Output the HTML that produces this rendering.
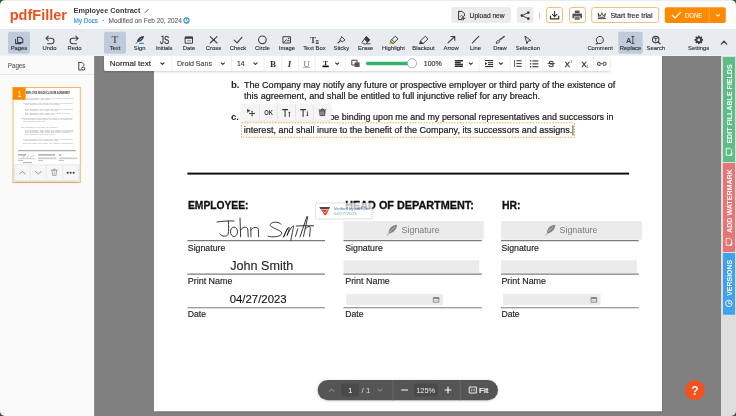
<!DOCTYPE html>
<html><head><meta charset="utf-8"><style>
html,body{margin:0;padding:0;background:#2d5b33;width:736px;height:416px;overflow:hidden}
.wrap{position:absolute;left:0;top:0;width:736px;height:416px;border-radius:5px;overflow:hidden}
svg{display:block;will-change:transform}
</style></head><body><div class="wrap">
<svg width="736" height="416" viewBox="0 0 736 416">
<defs><filter id="sh" x="-5%" y="-50%" width="110%" height="200%"><feDropShadow dx="0" dy="1" stdDeviation="1" flood-color="#000" flood-opacity="0.18"/></filter><filter id="sh2" x="-10%" y="-40%" width="120%" height="180%"><feDropShadow dx="0" dy="0.5" stdDeviation="1.2" flood-color="#000" flood-opacity="0.22"/></filter></defs>
<rect x="0" y="0" width="736" height="416" fill="#ffffff" /><rect x="0" y="0" width="736" height="30" fill="#ffffff" /><line x1="0" y1="0.5" x2="736" y2="0.5" stroke="#ececec" stroke-width="1" /><line x1="0" y1="29.5" x2="736" y2="29.5" stroke="#e3e6ea" stroke-width="1" /><text x="9.7" y="20.3" font-size="14.8" fill="#e8521f" font-family="Liberation Sans" font-weight="bold" textLength="57.3" lengthAdjust="spacingAndGlyphs" >pdfFiller</text><text x="73.6" y="13.3" font-size="7.6" fill="#3a3a3a" font-family="Liberation Sans" font-weight="bold" textLength="66.8" lengthAdjust="spacingAndGlyphs" >Employee Contract</text><path d="M145 12.5 L148.5 9" stroke="#888" stroke-width="0.9"/><text x="73.5" y="23" font-size="6.6" fill="#2f8ce0" font-family="Liberation Sans" stroke="#2f8ce0" stroke-width="0.1" textLength="24.5" lengthAdjust="spacingAndGlyphs" >My Docs</text><circle cx="103.2" cy="20.5" r="0.8" fill="#999"/><text x="108.5" y="23" font-size="6.6" fill="#666" font-family="Liberation Sans" stroke="#666" stroke-width="0.1" textLength="73.3" lengthAdjust="spacingAndGlyphs" >Modified on Feb 20, 2024</text><circle cx="186.5" cy="20.5" r="2.6" fill="none" stroke="#2f8ce0" stroke-width="1.1"/><rect x="451.3" y="7" width="59.6" height="16" fill="#ebebeb" rx="2" /><text x="469.6" y="18" font-size="6.9" fill="#2b2b2b" font-family="Liberation Sans" stroke="#2b2b2b" stroke-width="0.15" textLength="35" lengthAdjust="spacingAndGlyphs" >Upload new</text><rect x="517" y="7" width="16.5" height="16" fill="#ebebeb" rx="2" /><line x1="539.5" y1="12.5" x2="539.5" y2="18.5" stroke="#ccc" stroke-width="1" /><rect x="546.5" y="7.5" width="16" height="15" fill="#fff" rx="2.5" stroke="#f7b46c" stroke-width="0.9" /><rect x="569.5" y="7.5" width="16" height="15" fill="#fff" rx="2.5" stroke="#f7b46c" stroke-width="0.9" /><rect x="591.7" y="7.5" width="67" height="15" fill="#fff" rx="2.5" stroke="#f7b46c" stroke-width="0.9" /><text x="610.4" y="18" font-size="6.9" fill="#2b2b2b" font-family="Liberation Sans" stroke="#2b2b2b" stroke-width="0.15" textLength="42.2" lengthAdjust="spacingAndGlyphs" >Start free trial</text><rect x="664.8" y="7.3" width="61" height="15.7" fill="#ff8a00" rx="2" /><line x1="709.3" y1="7.3" x2="709.3" y2="23" stroke="#ffb25c" stroke-width="0.8" /><text x="685" y="18" font-size="6.9" fill="#fff5e8" font-family="Liberation Sans" stroke="#fff5e8" stroke-width="0.12" textLength="17.2" lengthAdjust="spacingAndGlyphs" >DONE</text><rect x="0" y="30" width="736" height="26" fill="#e8ecf0" /><line x1="0" y1="55.5" x2="736" y2="55.5" stroke="#eef1f4" stroke-width="1" /><rect x="8" y="31.8" width="22" height="22" fill="#bfcadb" rx="2" /><rect x="104" y="31.8" width="22" height="22" fill="#bfcadb" rx="2" /><rect x="618.2" y="31.8" width="24.5" height="22" fill="#bfcadb" rx="2" /><text x="19" y="50.1" font-size="6.1" fill="#2a2d31" font-family="Liberation Sans" stroke="#2a2d31" stroke-width="0.12" textLength="16.6" lengthAdjust="spacingAndGlyphs" text-anchor="middle" >Pages</text><text x="49.6" y="50.1" font-size="6.1" fill="#2a2d31" font-family="Liberation Sans" stroke="#2a2d31" stroke-width="0.12" textLength="14.0" lengthAdjust="spacingAndGlyphs" text-anchor="middle" >Undo</text><text x="74.5" y="50.1" font-size="6.1" fill="#2a2d31" font-family="Liberation Sans" stroke="#2a2d31" stroke-width="0.12" textLength="14.0" lengthAdjust="spacingAndGlyphs" text-anchor="middle" >Redo</text><text x="115" y="50.1" font-size="6.1" fill="#2a2d31" font-family="Liberation Sans" stroke="#2a2d31" stroke-width="0.12" textLength="10.75" lengthAdjust="spacingAndGlyphs" text-anchor="middle" >Text</text><text x="139.7" y="50.1" font-size="6.1" fill="#2a2d31" font-family="Liberation Sans" stroke="#2a2d31" stroke-width="0.12" textLength="11.73" lengthAdjust="spacingAndGlyphs" text-anchor="middle" >Sign</text><text x="164.2" y="50.1" font-size="6.1" fill="#2a2d31" font-family="Liberation Sans" stroke="#2a2d31" stroke-width="0.12" textLength="16.6" lengthAdjust="spacingAndGlyphs" text-anchor="middle" >Initials</text><text x="189" y="50.1" font-size="6.1" fill="#2a2d31" font-family="Liberation Sans" stroke="#2a2d31" stroke-width="0.12" textLength="12.37" lengthAdjust="spacingAndGlyphs" text-anchor="middle" >Date</text><text x="213.5" y="50.1" font-size="6.1" fill="#2a2d31" font-family="Liberation Sans" stroke="#2a2d31" stroke-width="0.12" textLength="15.29" lengthAdjust="spacingAndGlyphs" text-anchor="middle" >Cross</text><text x="238" y="50.1" font-size="6.1" fill="#2a2d31" font-family="Liberation Sans" stroke="#2a2d31" stroke-width="0.12" textLength="16.6" lengthAdjust="spacingAndGlyphs" text-anchor="middle" >Check</text><text x="262.4" y="50.1" font-size="6.1" fill="#2a2d31" font-family="Liberation Sans" stroke="#2a2d31" stroke-width="0.12" textLength="14.98" lengthAdjust="spacingAndGlyphs" text-anchor="middle" >Circle</text><text x="286.9" y="50.1" font-size="6.1" fill="#2a2d31" font-family="Liberation Sans" stroke="#2a2d31" stroke-width="0.12" textLength="16.28" lengthAdjust="spacingAndGlyphs" text-anchor="middle" >Image</text><text x="314.4" y="50.1" font-size="6.1" fill="#2a2d31" font-family="Liberation Sans" stroke="#2a2d31" stroke-width="0.12" textLength="22.45" lengthAdjust="spacingAndGlyphs" text-anchor="middle" >Text Box</text><text x="341.3" y="50.1" font-size="6.1" fill="#2a2d31" font-family="Liberation Sans" stroke="#2a2d31" stroke-width="0.12" textLength="15.62" lengthAdjust="spacingAndGlyphs" text-anchor="middle" >Sticky</text><text x="365.7" y="50.1" font-size="6.1" fill="#2a2d31" font-family="Liberation Sans" stroke="#2a2d31" stroke-width="0.12" textLength="15.31" lengthAdjust="spacingAndGlyphs" text-anchor="middle" >Erase</text><text x="393.5" y="50.1" font-size="6.1" fill="#2a2d31" font-family="Liberation Sans" stroke="#2a2d31" stroke-width="0.12" textLength="22.79" lengthAdjust="spacingAndGlyphs" text-anchor="middle" >Highlight</text><text x="423.5" y="50.1" font-size="6.1" fill="#2a2d31" font-family="Liberation Sans" stroke="#2a2d31" stroke-width="0.12" textLength="22.45" lengthAdjust="spacingAndGlyphs" text-anchor="middle" >Blackout</text><text x="451.2" y="50.1" font-size="6.1" fill="#2a2d31" font-family="Liberation Sans" stroke="#2a2d31" stroke-width="0.12" textLength="15.29" lengthAdjust="spacingAndGlyphs" text-anchor="middle" >Arrow</text><text x="475.5" y="50.1" font-size="6.1" fill="#2a2d31" font-family="Liberation Sans" stroke="#2a2d31" stroke-width="0.12" textLength="11.08" lengthAdjust="spacingAndGlyphs" text-anchor="middle" >Line</text><text x="500" y="50.1" font-size="6.1" fill="#2a2d31" font-family="Liberation Sans" stroke="#2a2d31" stroke-width="0.12" textLength="13.67" lengthAdjust="spacingAndGlyphs" text-anchor="middle" >Draw</text><text x="527.9" y="50.1" font-size="6.1" fill="#2a2d31" font-family="Liberation Sans" stroke="#2a2d31" stroke-width="0.12" textLength="24.1" lengthAdjust="spacingAndGlyphs" text-anchor="middle" >Selection</text><text x="600.1" y="50.1" font-size="6.1" fill="#2a2d31" font-family="Liberation Sans" stroke="#2a2d31" stroke-width="0.12" textLength="25.39" lengthAdjust="spacingAndGlyphs" text-anchor="middle" >Comment</text><text x="630.5" y="50.1" font-size="6.1" fill="#2a2d31" font-family="Liberation Sans" stroke="#2a2d31" stroke-width="0.12" textLength="21.49" lengthAdjust="spacingAndGlyphs" text-anchor="middle" >Replace</text><text x="655.9" y="50.1" font-size="6.1" fill="#2a2d31" font-family="Liberation Sans" stroke="#2a2d31" stroke-width="0.12" textLength="18.56" lengthAdjust="spacingAndGlyphs" text-anchor="middle" >Search</text><text x="698.7" y="50.1" font-size="6.1" fill="#2a2d31" font-family="Liberation Sans" stroke="#2a2d31" stroke-width="0.12" textLength="21.16" lengthAdjust="spacingAndGlyphs" text-anchor="middle" >Settings</text><rect x="0" y="56" width="94" height="360" fill="#fafafa" /><line x1="0" y1="74.5" x2="94" y2="74.5" stroke="#e6e6e6" stroke-width="1" /><text x="7.8" y="67.9" font-size="6.9" fill="#5a5a5a" font-family="Liberation Sans" stroke="#5a5a5a" stroke-width="0.12" textLength="17.6" lengthAdjust="spacingAndGlyphs" >Pages</text><rect x="13" y="87.5" width="67.3" height="95" fill="#fff" stroke="#f8b65c" stroke-width="1" /><rect x="12.7" y="87.4" width="13" height="12.4" fill="#ff8a00" /><text x="19.4" y="97.2" font-size="8.6" fill="#fff" font-family="Liberation Sans" textLength="4" lengthAdjust="spacingAndGlyphs" text-anchor="middle" >1</text><rect x="13.5" y="165.2" width="66.5" height="16.3" fill="#f7f7f7" stroke="#e3e3e3" stroke-width="0.6" /><rect x="94" y="56" width="627" height="360" fill="#808080" /><line x1="94.5" y1="56" x2="94.5" y2="416" stroke="#8e8e8e" stroke-width="1" /><rect x="154" y="56" width="508" height="355.5" fill="#ffffff" /><rect x="154.5" y="411.5" width="508" height="1" fill="#737373" /><rect x="662" y="56" width="1" height="356.5" fill="#767676" /><rect x="721.4" y="56" width="14.6" height="360" fill="#dedede" /><line x1="721.6" y1="56" x2="721.6" y2="416" stroke="#cfcfcf" stroke-width="0.5" /><rect x="723" y="57" width="12" height="105" fill="#5dbd87" /><rect x="723" y="163" width="12" height="89" fill="#e97474" /><rect x="723" y="253" width="12" height="61.7" fill="#42a1ec" /><rect x="104" y="56" width="506" height="15" fill="#ffffff" rx="2" filter="url(#sh)"/><rect x="104" y="56" width="506" height="4" fill="#ffffff" /><text x="109.8" y="66.3" font-size="8" fill="#1f1f1f" font-family="Liberation Sans" stroke="#1f1f1f" stroke-width="0.15" textLength="41.2" lengthAdjust="spacingAndGlyphs" >Normal text</text><text x="177" y="66.3" font-size="7.6" fill="#444" font-family="Liberation Sans" stroke="#444" stroke-width="0.12" textLength="35" lengthAdjust="spacingAndGlyphs" >Droid Sans</text><text x="237" y="66.3" font-size="7.6" fill="#333" font-family="Liberation Sans" stroke="#333" stroke-width="0.12" textLength="7.6" lengthAdjust="spacingAndGlyphs" >14</text><line x1="171.7" y1="56" x2="171.7" y2="71" stroke="#ececec" stroke-width="0.8" /><line x1="231.5" y1="56" x2="231.5" y2="71" stroke="#ececec" stroke-width="0.8" /><line x1="264.1" y1="56" x2="264.1" y2="71" stroke="#ececec" stroke-width="0.8" /><line x1="281.8" y1="56" x2="281.8" y2="71" stroke="#ececec" stroke-width="0.8" /><line x1="298.4" y1="56" x2="298.4" y2="71" stroke="#ececec" stroke-width="0.8" /><line x1="315.2" y1="56" x2="315.2" y2="71" stroke="#ececec" stroke-width="0.8" /><line x1="345.1" y1="56" x2="345.1" y2="71" stroke="#ececec" stroke-width="0.8" /><line x1="447.8" y1="56" x2="447.8" y2="71" stroke="#ececec" stroke-width="0.8" /><line x1="479.1" y1="56" x2="479.1" y2="71" stroke="#ececec" stroke-width="0.8" /><line x1="510.2" y1="56" x2="510.2" y2="71" stroke="#ececec" stroke-width="0.8" /><line x1="525.6" y1="56" x2="525.6" y2="71" stroke="#ececec" stroke-width="0.8" /><line x1="542.7" y1="56" x2="542.7" y2="71" stroke="#ececec" stroke-width="0.8" /><line x1="559.8" y1="56" x2="559.8" y2="71" stroke="#ececec" stroke-width="0.8" /><line x1="576.9" y1="56" x2="576.9" y2="71" stroke="#ececec" stroke-width="0.8" /><line x1="593.5" y1="56" x2="593.5" y2="71" stroke="#ececec" stroke-width="0.8" /><text x="230.9" y="88" font-size="9.6" fill="#222" font-family="Liberation Sans" font-weight="bold" >b.</text><text x="244" y="88" font-size="9.4" fill="#222" font-family="Liberation Sans" stroke="#222" stroke-width="0.22" textLength="371.4" lengthAdjust="spacingAndGlyphs" >The Company may notify any future or prospective employer or third party of the existence of</text><text x="244" y="99" font-size="9.4" fill="#222" font-family="Liberation Sans" stroke="#222" stroke-width="0.22" textLength="296" lengthAdjust="spacingAndGlyphs" >this agreement, and shall be entitled to full injunctive relief for any breach.</text><text x="230.9" y="119.6" font-size="9.6" fill="#222" font-family="Liberation Sans" font-weight="bold" >c.</text><text x="329.4" y="119.6" font-size="9.4" fill="#222" font-family="Liberation Sans" stroke="#222" stroke-width="0.22" textLength="284" lengthAdjust="spacingAndGlyphs" >be binding upon me and my personal representatives and successors in</text><text x="243.8" y="132.7" font-size="9.4" fill="#222" font-family="Liberation Sans" stroke="#222" stroke-width="0.22" textLength="328.6" lengthAdjust="spacingAndGlyphs" >interest, and shall inure to the benefit of the Company, its successors and assigns.</text><rect x="187.3" y="172.6" width="441.8" height="2" fill="#111" /><text x="188" y="208.8" font-size="10.6" fill="#111" font-family="Liberation Sans" stroke="#111" stroke-width="0.3" font-weight="bold" textLength="60.5" lengthAdjust="spacingAndGlyphs" >EMPLOYEE:</text><text x="345.2" y="208.8" font-size="10.6" fill="#111" font-family="Liberation Sans" stroke="#111" stroke-width="0.3" font-weight="bold" textLength="128.6" lengthAdjust="spacingAndGlyphs" >HEAD OF DEPARTMENT:</text><text x="502" y="208.8" font-size="10.6" fill="#111" font-family="Liberation Sans" stroke="#111" stroke-width="0.3" font-weight="bold" textLength="18.6" lengthAdjust="spacingAndGlyphs" >HR:</text><line x1="187.4" y1="240.6" x2="325" y2="240.6" stroke="#7c7c7c" stroke-width="1.05" /><line x1="187.4" y1="274.1" x2="325" y2="274.1" stroke="#7c7c7c" stroke-width="1.05" /><line x1="187.4" y1="307.7" x2="325" y2="307.7" stroke="#7c7c7c" stroke-width="1.05" /><line x1="343.5" y1="240.6" x2="481.8" y2="240.6" stroke="#7c7c7c" stroke-width="1.05" /><line x1="343.5" y1="274.1" x2="481.8" y2="274.1" stroke="#7c7c7c" stroke-width="1.05" /><line x1="343.5" y1="307.7" x2="481.8" y2="307.7" stroke="#7c7c7c" stroke-width="1.05" /><line x1="501" y1="240.6" x2="638.7" y2="240.6" stroke="#7c7c7c" stroke-width="1.05" /><line x1="501" y1="274.1" x2="638.7" y2="274.1" stroke="#7c7c7c" stroke-width="1.05" /><line x1="501" y1="307.7" x2="638.7" y2="307.7" stroke="#7c7c7c" stroke-width="1.05" /><text x="187.8" y="250.7" font-size="8.8" fill="#222" font-family="Liberation Sans" stroke="#222" stroke-width="0.15" textLength="37.6" lengthAdjust="spacingAndGlyphs" >Signature</text><text x="187.8" y="283.7" font-size="8.8" fill="#222" font-family="Liberation Sans" stroke="#222" stroke-width="0.15" textLength="44.6" lengthAdjust="spacingAndGlyphs" >Print Name</text><text x="187.8" y="317.2" font-size="8.8" fill="#222" font-family="Liberation Sans" stroke="#222" stroke-width="0.15" textLength="18.3" lengthAdjust="spacingAndGlyphs" >Date</text><text x="345.2" y="250.7" font-size="8.8" fill="#222" font-family="Liberation Sans" stroke="#222" stroke-width="0.15" textLength="37.6" lengthAdjust="spacingAndGlyphs" >Signature</text><text x="345.2" y="283.7" font-size="8.8" fill="#222" font-family="Liberation Sans" stroke="#222" stroke-width="0.15" textLength="44.6" lengthAdjust="spacingAndGlyphs" >Print Name</text><text x="345.2" y="317.2" font-size="8.8" fill="#222" font-family="Liberation Sans" stroke="#222" stroke-width="0.15" textLength="18.3" lengthAdjust="spacingAndGlyphs" >Date</text><text x="501.4" y="250.7" font-size="8.8" fill="#222" font-family="Liberation Sans" stroke="#222" stroke-width="0.15" textLength="37.6" lengthAdjust="spacingAndGlyphs" >Signature</text><text x="501.4" y="283.7" font-size="8.8" fill="#222" font-family="Liberation Sans" stroke="#222" stroke-width="0.15" textLength="44.6" lengthAdjust="spacingAndGlyphs" >Print Name</text><text x="501.4" y="317.2" font-size="8.8" fill="#222" font-family="Liberation Sans" stroke="#222" stroke-width="0.15" textLength="18.3" lengthAdjust="spacingAndGlyphs" >Date</text><rect x="343.5" y="221.1" width="140.2" height="18.5" fill="#ebebeb" /><rect x="343.5" y="260.3" width="135.7" height="12.7" fill="#ebebeb" /><rect x="346.1" y="294.1" width="96.8" height="11.1" fill="#ebebeb" /><rect x="501.1" y="221.1" width="141" height="18.5" fill="#ebebeb" /><rect x="501.1" y="260.3" width="135.7" height="12.7" fill="#ebebeb" /><rect x="503.2" y="294.1" width="97.4" height="11.1" fill="#ebebeb" /><text x="401.6" y="232.9" font-size="8.9" fill="#7a7a7a" font-family="Liberation Sans" >Signature</text><text x="559.5" y="232.9" font-size="8.9" fill="#7a7a7a" font-family="Liberation Sans" >Signature</text><text x="230.3" y="270.3" font-size="13" fill="#222" font-family="Liberation Sans" stroke="#222" stroke-width="0.1" textLength="63" lengthAdjust="spacingAndGlyphs" >John Smith</text><text x="229.7" y="302.6" font-size="11.6" fill="#111" font-family="Liberation Sans" stroke="#111" stroke-width="0.1" textLength="57" lengthAdjust="spacingAndGlyphs" >04/27/2023</text><rect x="317.6" y="380" width="180.4" height="20.2" fill="#555555" rx="10.1" filter="url(#sh2)"/><circle cx="694.8" cy="390.3" r="10" fill="#f4511e"/><text x="694.8" y="394.5" font-size="12" fill="#fff" font-family="Liberation Sans" font-weight="bold" text-anchor="middle" >?</text><path d="M17.6 37.2 H20.6 L22.8 39.4 V42.6 H17.6 Z" stroke="#3a3d42" stroke-width="1.05" fill="none" stroke-linecap="round" stroke-linejoin="round" /><path d="M15.6 39.2 V43.6 H20.8" stroke="#3a3d42" stroke-width="1.05" fill="none" stroke-linecap="round" stroke-linejoin="round" /><path d="M46 38.3 L48.2 36.1 M46 38.3 L48.2 40.5 M46 38.3 H51.2 A2.75 2.75 0 0 1 51.2 43.8 H47.6" stroke="#3a3d42" stroke-width="1.05" fill="none" stroke-linecap="round" stroke-linejoin="round" /><path d="M78.1 38.3 L75.9 36.1 M78.1 38.3 L75.9 40.5 M78.1 38.3 H72.9 A2.75 2.75 0 0 0 72.9 43.8 H76.5" stroke="#3a3d42" stroke-width="1.05" fill="none" stroke-linecap="round" stroke-linejoin="round" /><text x="115" y="43.3" font-size="10.2" fill="#666" font-family="Liberation Serif" font-weight="bold" text-anchor="middle" >T</text><path d="M137 41.4 C137.3 38.4 140 36.2 144.1 35.9 C143.8 39 141.4 41.3 138 41.8 Z" fill="#3a3d42" /><path d="M136.2 43.4 L139 40.4" stroke="#3a3d42" stroke-width="0.8" fill="none" stroke-linecap="round" stroke-linejoin="round" /><path d="M139.6 40.2 L142 38" stroke="#e8ecf0" stroke-width="0.5"/><rect x="139.1" y="42.8" width="4.9" height="1.3" fill="#1e90ff" rx="0.6" /><text x="160" y="43.6" font-size="10.6" fill="#3a3d42" font-family="Liberation Sans" stroke="#3a3d42" stroke-width="0.35" textLength="9.2" lengthAdjust="spacingAndGlyphs" >JS</text><path d="M185.5 37.1 H192.5 V43.2 H185.5 Z" stroke="#3a3d42" stroke-width="1" fill="none" stroke-linecap="round" stroke-linejoin="round" /><rect x="185.2" y="36.6" width="7.6" height="2.2" fill="#3a3d42" /><rect x="187" y="40" width="4" height="1.2" fill="#9aa0a6" /><path d="M210.2 36.6 L217 43 M217 36.6 L210.2 43" stroke="#3a3d42" stroke-width="1.1" fill="none" stroke-linecap="round" stroke-linejoin="round" /><path d="M234.2 40.2 L237.1 42.9 L241.9 37.4" stroke="#3a3d42" stroke-width="1.1" fill="none" stroke-linecap="round" stroke-linejoin="round" /><circle cx="262.4" cy="39.85" r="3.85" fill="none" stroke="#3a3d42" stroke-width="1.05"/><path d="M283.3 36.7 H290.5 V43 H283.3 Z" stroke="#3a3d42" stroke-width="1" fill="none" stroke-linecap="round" stroke-linejoin="round" /><path d="M284 42.2 L286.3 39.6 L288 41.2 L289 40.3 L290.2 41.5" stroke="#3a3d42" stroke-width="0.9" fill="none" stroke-linecap="round" stroke-linejoin="round" /><circle cx="288.7" cy="38.6" r="0.75" fill="#3a3d42"/><text x="313" y="43" font-size="9" fill="#3a3d42" font-family="Liberation Serif" font-weight="bold" text-anchor="middle" >T</text><rect x="315.8" y="40.2" width="2.8" height="0.9" fill="#3a3d42" /><rect x="315.8" y="41.7" width="2.8" height="0.9" fill="#3a3d42" /><rect x="315.8" y="43.1" width="2.8" height="0.9" fill="#3a3d42" /><path d="M338 43 L340.6 40.4" stroke="#3a3d42" stroke-width="1.1" fill="none" stroke-linecap="round" stroke-linejoin="round" /><path d="M341.7 36.8 L345 40.1 L343.7 40.5 L342.3 42.1 L339.7 39.5 L341.3 38.1 Z" stroke="#3a3d42" stroke-width="1" fill="none" stroke-linecap="round" stroke-linejoin="round" /><path d="M366.6 36.6 L369.9 39.9 L365.7 44 H363.6 L362.3 42.7 Z" stroke="#3a3d42" stroke-width="1" fill="none" stroke-linecap="round" stroke-linejoin="round" /><path d="M366.6 36.6 L369.9 39.9 L367.3 42.4 L364.1 39.2 Z" fill="#3a3d42" /><path d="M366.5 43.8 H370.2" stroke="#3a3d42" stroke-width="0.9" fill="none" stroke-linecap="round" stroke-linejoin="round" /><path d="M389.4 43.6 L390.2 40.6 L392.4 42.8 Z" fill="#f2b705" /><rect x="389.2" y="42.8" width="4" height="1.3" fill="#f2b705" /><path d="M390.6 40.8 L395.3 36.2 L398 38.9 L393.3 43.4 Z" stroke="#3a3d42" stroke-width="1" fill="none" stroke-linecap="round" stroke-linejoin="round" /><path d="M391.8 39.6 L394.4 42.2" stroke="#3a3d42" stroke-width="0.9" fill="none" stroke-linecap="round" stroke-linejoin="round" /><path d="M419.4 43.6 L420.2 40.6 L422.4 42.8 Z" fill="#3a3d42" /><rect x="419.2" y="42.8" width="4" height="1.3" fill="#3a3d42" /><path d="M420.6 40.8 L425.3 36.2 L428 38.9 L423.3 43.4 Z" stroke="#3a3d42" stroke-width="1" fill="none" stroke-linecap="round" stroke-linejoin="round" /><path d="M448 42.8 L454.8 36.5 M451 36.5 H454.8 V40.3" stroke="#3a3d42" stroke-width="1.1" fill="none" stroke-linecap="round" stroke-linejoin="round" /><path d="M472.4 42.8 L478.8 36.4" stroke="#3a3d42" stroke-width="1.1" fill="none" stroke-linecap="round" stroke-linejoin="round" /><path d="M499.6 40.1 L504.2 36.4" stroke="#3a3d42" stroke-width="1.3" fill="none" stroke-linecap="round" stroke-linejoin="round" /><path d="M496.4 43 C496.3 41.6 497 40.5 498.2 40.4 L499.6 41.6 C499.4 42.8 498 43.3 496.4 43 Z" stroke="#3a3d42" stroke-width="0.9" fill="none" stroke-linecap="round" stroke-linejoin="round" /><path d="M525.2 36.2 L530.9 40.7 L528.3 41 L527.1 43.3 Z" stroke="#3a3d42" stroke-width="1" fill="none" stroke-linecap="round" stroke-linejoin="round" /><path d="M597.3 42.6 A3.6 3.6 0 1 1 598.6 43.4 L596.2 43.9 Z" stroke="#3a3d42" stroke-width="1" fill="none" stroke-linecap="round" stroke-linejoin="round" /><circle cx="598.8" cy="40" r="0.35" fill="#3a3d42"/><circle cx="600.1" cy="40" r="0.35" fill="#3a3d42"/><circle cx="601.4" cy="40" r="0.35" fill="#3a3d42"/><text x="628.7" y="43.1" font-size="7.4" fill="#3a3d42" font-family="Liberation Sans" font-weight="bold" text-anchor="middle" >A</text><path d="M631.8 36.6 H633.9 M632.85 36.6 V43.4 M631.8 43.4 H633.9" stroke="#3a3d42" stroke-width="0.9" fill="none" stroke-linecap="round" stroke-linejoin="round" /><circle cx="655.7" cy="39.6" r="3.25" fill="none" stroke="#3a3d42" stroke-width="1.05"/><path d="M658.1 42 L660 43.8" stroke="#3a3d42" stroke-width="1.2" fill="none" stroke-linecap="round" stroke-linejoin="round" /><path d="M654.3 38.3 H657.1 M655.7 38.3 V41.1" stroke="#3a3d42" stroke-width="0.9" fill="none" stroke-linecap="round" stroke-linejoin="round" /><rect x="697.9" y="35.7" width="1.8" height="2" fill="#3a3d42" transform="rotate(0 698.8 39.9)"/><rect x="697.9" y="35.7" width="1.8" height="2" fill="#3a3d42" transform="rotate(45 698.8 39.9)"/><rect x="697.9" y="35.7" width="1.8" height="2" fill="#3a3d42" transform="rotate(90 698.8 39.9)"/><rect x="697.9" y="35.7" width="1.8" height="2" fill="#3a3d42" transform="rotate(135 698.8 39.9)"/><rect x="697.9" y="35.7" width="1.8" height="2" fill="#3a3d42" transform="rotate(180 698.8 39.9)"/><rect x="697.9" y="35.7" width="1.8" height="2" fill="#3a3d42" transform="rotate(225 698.8 39.9)"/><rect x="697.9" y="35.7" width="1.8" height="2" fill="#3a3d42" transform="rotate(270 698.8 39.9)"/><rect x="697.9" y="35.7" width="1.8" height="2" fill="#3a3d42" transform="rotate(315 698.8 39.9)"/><circle cx="698.8" cy="39.9" r="3.2" fill="#3a3d42"/><circle cx="698.8" cy="39.9" r="1.45" fill="#e8ecf0"/><path d="M721.3 44.1 L724 41.3 L726.7 44.1" stroke="#3a3d42" stroke-width="1.3" fill="none" stroke-linecap="round" stroke-linejoin="round" /><path d="M145.2 12.6 L148.6 9.2" stroke="#888" stroke-width="0.9" fill="none" stroke-linecap="round" stroke-linejoin="round" /><path d="M186.5 19 V20.6 L187.6 21.4" stroke="#2f8ce0" stroke-width="0.8" fill="none" stroke-linecap="round" stroke-linejoin="round" /><path d="M458.6 11.4 H462.2 L464.4 13.6 V15.6 M458.6 11.4 V19.6 H461.6" stroke="#333" stroke-width="1" fill="none" stroke-linecap="round" stroke-linejoin="round" /><path d="M463.2 16.4 V20 M461.4 18.2 H465" stroke="#333" stroke-width="1" fill="none" stroke-linecap="round" stroke-linejoin="round" /><path d="M460.2 16.6 L461.4 15.2 L462.6 16.3" stroke="#333" stroke-width="0.7" fill="none" stroke-linecap="round" stroke-linejoin="round" /><circle cx="521.9" cy="15.6" r="1.3" fill="#333"/><circle cx="528.3" cy="12.6" r="1.3" fill="#333"/><circle cx="528.3" cy="18.6" r="1.3" fill="#333"/><path d="M521.9 15.6 L528.3 12.6 M521.9 15.6 L528.3 18.6" stroke="#333" stroke-width="0.9" fill="none" stroke-linecap="round" stroke-linejoin="round" /><path d="M554.6 11.2 V16.4 M552.4 14.4 L554.6 16.6 L556.8 14.4" stroke="#333" stroke-width="1.1" fill="none" stroke-linecap="round" stroke-linejoin="round" /><path d="M550.5 16.2 V18.9 H558.7 V16.2" stroke="#333" stroke-width="1.2" fill="none" stroke-linecap="round" stroke-linejoin="round" /><path d="M574.8 10.6 H579.6 V13 H574.8 Z" fill="#555" /><path d="M573 13.6 H581.4 Q582 13.6 582 14.2 V18.2 H580.4 V16.6 H574 V18.2 H572.4 V14.2 Q572.4 13.6 573 13.6 Z" fill="#555" /><path d="M574.6 17 H579.8 V19.9 H574.6 Z" fill="#777" /><path d="M598.6 14.2 L600.3 16 L601.9 13.4 L603.5 16 L605.2 14.2 L604.6 17.2 H599.2 Z" stroke="#333" stroke-width="0.9" fill="none" stroke-linecap="round" stroke-linejoin="round" /><circle cx="598.5" cy="13.6" r="0.6" fill="#333"/><circle cx="601.9" cy="12.8" r="0.6" fill="#333"/><circle cx="605.3" cy="13.6" r="0.6" fill="#333"/><path d="M598.2 18.6 H605.6" stroke="#333" stroke-width="0.9" fill="none" stroke-linecap="round" stroke-linejoin="round" /><path d="M672.2 15.2 L675 18 L680.4 12.5" stroke="#fff" stroke-width="1.2" fill="none" stroke-linecap="round" stroke-linejoin="round" /><path d="M716.5 14.8 L718 16.2 L719.5 14.8" stroke="#fff" stroke-width="1.1" fill="none" stroke-linecap="round" stroke-linejoin="round" /><path d="M160.8 62.800000000000004 L162.4 64.4 L164.0 62.800000000000004" stroke="#333" stroke-width="1.1" fill="none" stroke-linecap="round" stroke-linejoin="round" /><path d="M221.20000000000002 62.800000000000004 L222.8 64.4 L224.4 62.800000000000004" stroke="#333" stroke-width="1.1" fill="none" stroke-linecap="round" stroke-linejoin="round" /><path d="M253.8 62.800000000000004 L255.4 64.4 L257.0 62.800000000000004" stroke="#333" stroke-width="1.1" fill="none" stroke-linecap="round" stroke-linejoin="round" /><path d="M335.59999999999997 62.800000000000004 L337.2 64.4 L338.8 62.800000000000004" stroke="#333" stroke-width="1.1" fill="none" stroke-linecap="round" stroke-linejoin="round" /><path d="M469.2 62.800000000000004 L470.8 64.4 L472.40000000000003 62.800000000000004" stroke="#333" stroke-width="1.1" fill="none" stroke-linecap="round" stroke-linejoin="round" /><path d="M499.29999999999995 62.800000000000004 L500.9 64.4 L502.5 62.800000000000004" stroke="#333" stroke-width="1.1" fill="none" stroke-linecap="round" stroke-linejoin="round" /><text x="273" y="66.9" font-size="9" fill="#333" font-family="Liberation Serif" font-weight="bold" text-anchor="middle" >B</text><text x="289.5" y="66.9" font-size="9" fill="#333" font-family="Liberation Serif" font-weight="bold" font-style="italic" text-anchor="middle" >I</text><text x="306.6" y="66.9" font-size="9" fill="#8f8f8f" font-family="Liberation Serif" stroke="#8f8f8f" stroke-width="0.2" text-anchor="middle" >U</text><path d="M303.3 67.6 H309.9" stroke="#9a9a9a" stroke-width="0.8" fill="none" stroke-linecap="round" stroke-linejoin="round" /><text x="325.5" y="64.5" font-size="7" fill="#222" font-family="Liberation Serif" font-weight="bold" text-anchor="middle" >T</text><rect x="322.3" y="65.5" width="6.6" height="1.7" fill="#111" rx="0.8" /><path d="M352.2 60.2 H357 V65 H352.2 Z" stroke="#444" stroke-width="1" fill="none" stroke-linecap="round" stroke-linejoin="round" /><path d="M354.6 62.4 H359.6 V67 H354.6 Z" fill="#555" /><rect x="365.9" y="61.7" width="46" height="3.5" fill="#34b36b" rx="1.75" /><circle cx="412" cy="63.3" r="4.6" fill="#fff" stroke="#9a9a9a" stroke-width="0.8"/><text x="423.8" y="65.9" font-size="7.2" fill="#333" font-family="Liberation Sans" stroke="#333" stroke-width="0.15" textLength="18" lengthAdjust="spacingAndGlyphs" >100%</text><rect x="454.9" y="60.0" width="8" height="1.3" fill="#333" /><rect x="454.9" y="61.9" width="5.6" height="1.3" fill="#333" /><rect x="454.9" y="63.8" width="8" height="1.3" fill="#333" /><rect x="454.9" y="65.7" width="8" height="1.3" fill="#333" /><rect x="454.9" y="60" width="8" height="1.3" fill="#333" /><rect x="454.9" y="61.9" width="5.6" height="1.3" fill="#333" /><rect x="454.9" y="63.8" width="8" height="1.3" fill="#333" /><rect x="454.9" y="65.7" width="8" height="1.3" fill="#333" /><rect x="485" y="60" width="8.1" height="1.1" fill="#333" /><rect x="488" y="62.1" width="5.1" height="1.1" fill="#333" /><rect x="488" y="64" width="5.1" height="1.1" fill="#333" /><rect x="485" y="66" width="8.1" height="1.1" fill="#333" /><path d="M485 62 L487.3 63.6 L485 65.2 Z" fill="#333" /><rect x="516.4" y="60.2" width="5.2" height="1.1" fill="#444" /><rect x="516.4" y="63" width="5.2" height="1.1" fill="#444" /><rect x="516.4" y="65.8" width="5.2" height="1.1" fill="#444" /><rect x="514.1" y="60" width="0.9" height="7" fill="#555" /><rect x="529.9" y="60.3" width="1.4" height="1.3" fill="#333" /><rect x="532.4" y="60.4" width="6" height="1.1" fill="#333" /><rect x="529.9" y="63.199999999999996" width="1.4" height="1.3" fill="#333" /><rect x="532.4" y="63.3" width="6" height="1.1" fill="#333" /><rect x="529.9" y="66.10000000000001" width="1.4" height="1.3" fill="#333" /><rect x="532.4" y="66.2" width="6" height="1.1" fill="#333" /><text x="551.2" y="67" font-size="8.6" fill="#333" font-family="Liberation Sans" stroke="#333" stroke-width="0.3" text-anchor="middle" >S</text><path d="M548 63.6 H554.5" stroke="#333" stroke-width="0.9" fill="none" stroke-linecap="round" stroke-linejoin="round" /><text x="567.3" y="67" font-size="7.8" fill="#333" font-family="Liberation Sans" stroke="#333" stroke-width="0.3" text-anchor="middle" >X</text><text x="571.3" y="62.5" font-size="3.5" fill="#333" font-family="Liberation Sans" text-anchor="middle" >1</text><text x="584" y="67" font-size="7.8" fill="#333" font-family="Liberation Sans" stroke="#333" stroke-width="0.3" text-anchor="middle" >X</text><text x="587.6" y="68.3" font-size="3.5" fill="#333" font-family="Liberation Sans" text-anchor="middle" >1</text><path d="M600 62.3 H598.9 A1.5 1.5 0 0 0 598.9 65.3 H600 M603.6 62.3 H604.7 A1.5 1.5 0 0 1 604.7 65.3 H603.6 M600 63.8 H603.6" stroke="#333" stroke-width="1" fill="none" stroke-linecap="round" stroke-linejoin="round" /><text x="731.6" y="143.6" font-size="7.3" fill="#fff" font-family="Liberation Sans" font-weight="bold" textLength="79.3" lengthAdjust="spacingAndGlyphs" transform="rotate(-90 731.6 143.6)">EDIT FILLABLE FIELDS</text><text x="731.6" y="233" font-size="7.3" fill="#fff" font-family="Liberation Sans" font-weight="bold" textLength="63.9" lengthAdjust="spacingAndGlyphs" transform="rotate(-90 731.6 233)">ADD WATERMARK</text><text x="731.6" y="295.8" font-size="7.3" fill="#fff" font-family="Liberation Sans" font-weight="bold" textLength="36" lengthAdjust="spacingAndGlyphs" transform="rotate(-90 731.6 295.8)">VERSIONS</text><path d="M726.6 148.3 H730 L731.6 149.9 V155.3 H726.6 Z" stroke="#fff" stroke-width="0.8" fill="none" stroke-linecap="round" stroke-linejoin="round" /><path d="M729.2 155.6 L732 152.4 L732.6 153 L731.4 155.6 Z" fill="#fff" /><path d="M726.6 238.3 H730 L731.6 239.9 V245.3 H726.6 Z" stroke="#fff" stroke-width="0.8" fill="none" stroke-linecap="round" stroke-linejoin="round" /><path d="M729.2 245.6 L732 242.4 L732.6 243 L731.4 245.6 Z" fill="#fff" /><circle cx="728.8" cy="303.4" r="3.2" fill="none" stroke="#fff" stroke-width="0.9"/><path d="M728.8 301.3 V303.6 L730.4 303.6" stroke="#fff" stroke-width="0.8" fill="none" stroke-linecap="round" stroke-linejoin="round" /><text x="26" y="93.9" font-size="2.9" fill="#333" font-family="Liberation Sans" font-weight="bold" textLength="44" lengthAdjust="spacingAndGlyphs" >EMPLOYEE NON-DISCLOSURE AGREEMENT</text><text x="26" y="98.8" font-size="1.7" fill="#a0a0a0" font-family="Liberation Sans" textLength="48" lengthAdjust="spacingAndGlyphs" >The Company may notify any future or prospect</text><text x="26" y="100.10000000000001" font-size="1.7" fill="#a0a0a0" font-family="Liberation Sans" textLength="24" lengthAdjust="spacingAndGlyphs" >The Company may notify</text><text x="23" y="103.9" font-size="1.7" fill="#a0a0a0" font-family="Liberation Sans" textLength="50" lengthAdjust="spacingAndGlyphs" >The Company may notify any future or prospectiv</text><text x="25" y="105.4" font-size="1.7" fill="#a0a0a0" font-family="Liberation Sans" textLength="35" lengthAdjust="spacingAndGlyphs" >The Company may notify any future</text><text x="25" y="109.5" font-size="1.7" fill="#a0a0a0" font-family="Liberation Sans" textLength="48" lengthAdjust="spacingAndGlyphs" >The Company may notify any future or prospect</text><text x="25" y="110.8" font-size="1.7" fill="#a0a0a0" font-family="Liberation Sans" textLength="33" lengthAdjust="spacingAndGlyphs" >The Company may notify any futu</text><text x="25" y="113.8" font-size="1.7" fill="#a0a0a0" font-family="Liberation Sans" textLength="45" lengthAdjust="spacingAndGlyphs" >The Company may notify any future or prosp</text><text x="25" y="115.2" font-size="1.7" fill="#a0a0a0" font-family="Liberation Sans" textLength="30" lengthAdjust="spacingAndGlyphs" >The Company may notify any f</text><text x="21" y="119.0" font-size="1.7" fill="#a0a0a0" font-family="Liberation Sans" textLength="52" lengthAdjust="spacingAndGlyphs" >The Company may notify any future or prospective </text><text x="23" y="120.3" font-size="1.7" fill="#a0a0a0" font-family="Liberation Sans" textLength="49" lengthAdjust="spacingAndGlyphs" >The Company may notify any future or prospecti</text><text x="23" y="121.7" font-size="1.7" fill="#a0a0a0" font-family="Liberation Sans" textLength="22" lengthAdjust="spacingAndGlyphs" >The Company may noti</text><text x="21" y="127.7" font-size="1.7" fill="#a0a0a0" font-family="Liberation Sans" textLength="37" lengthAdjust="spacingAndGlyphs" >The Company may notify any future o</text><text x="25" y="130.79999999999998" font-size="1.7" fill="#a0a0a0" font-family="Liberation Sans" textLength="48" lengthAdjust="spacingAndGlyphs" >The Company may notify any future or prospect</text><text x="25" y="132.1" font-size="1.7" fill="#a0a0a0" font-family="Liberation Sans" textLength="48" lengthAdjust="spacingAndGlyphs" >The Company may notify any future or prospect</text><text x="25" y="133.39999999999998" font-size="1.7" fill="#a0a0a0" font-family="Liberation Sans" textLength="45" lengthAdjust="spacingAndGlyphs" >The Company may notify any future or prosp</text><text x="25" y="134.7" font-size="1.7" fill="#a0a0a0" font-family="Liberation Sans" textLength="30" lengthAdjust="spacingAndGlyphs" >The Company may notify any f</text><text x="23" y="139.7" font-size="1.7" fill="#a0a0a0" font-family="Liberation Sans" textLength="50" lengthAdjust="spacingAndGlyphs" >The Company may notify any future or prospectiv</text><text x="25" y="140.89999999999998" font-size="1.7" fill="#a0a0a0" font-family="Liberation Sans" textLength="33" lengthAdjust="spacingAndGlyphs" >The Company may notify any futu</text><text x="23" y="144.0" font-size="1.7" fill="#a0a0a0" font-family="Liberation Sans" textLength="50" lengthAdjust="spacingAndGlyphs" >The Company may notify any future or prospectiv</text><rect x="18" y="150.2" width="58" height="1" fill="#9a9a9a" /><rect x="18" y="154.3" width="8" height="1.2" fill="#9a9a9a" /><rect x="38" y="154.3" width="17" height="1.2" fill="#9a9a9a" /><rect x="59" y="154.3" width="2.5" height="1.2" fill="#9a9a9a" /><rect x="38" y="157" width="18.5" height="1.6" fill="#e6e6e6" /><rect x="59" y="157" width="18.5" height="1.6" fill="#e6e6e6" /><rect x="18" y="158.6" width="17" height="0.5" fill="#999" /><rect x="38" y="158.6" width="18.5" height="0.5" fill="#999" /><rect x="59" y="158.6" width="18.5" height="0.5" fill="#999" /><path d="M22.5 158 C23.5 155.5 25 156 24 157.4 M27 157.6 L28.5 155.6 M30 158 C31 156 33 156 34 155.6" stroke="#777" stroke-width="0.4" fill="none" stroke-linecap="round" stroke-linejoin="round" /><rect x="18" y="160.2" width="5" height="0.7" fill="#aaa" /><rect x="38" y="160.2" width="5" height="0.7" fill="#aaa" /><rect x="59" y="160.2" width="5" height="0.7" fill="#aaa" /><rect x="23" y="162.3" width="9" height="0.8" fill="#999" /><rect x="14.6" y="164.9" width="63.9" height="15.8" rx="2" fill="#f7f7f7" stroke="#e0e0e0" stroke-width="0.6" filter="url(#sh)"/><line x1="30.4" y1="164.9" x2="30.4" y2="180.7" stroke="#e0e0e0" stroke-width="0.6" /><line x1="46.3" y1="164.9" x2="46.3" y2="180.7" stroke="#e0e0e0" stroke-width="0.6" /><line x1="62.7" y1="164.9" x2="62.7" y2="180.7" stroke="#e0e0e0" stroke-width="0.6" /><path d="M19.6 173.8 L22.4 171.6 L25.2 173.8" stroke="#777" stroke-width="0.8" fill="none" stroke-linecap="round" stroke-linejoin="round" /><path d="M35.6 171.6 L38.4 173.9 L41.2 171.6" stroke="#777" stroke-width="0.8" fill="none" stroke-linecap="round" stroke-linejoin="round" /><path d="M51.3 170.2 H57.3 M52 170.2 L52.5 175.4 H56.1 L56.6 170.2 M53.4 170.2 V169.2 H55.2 V170.2 M54.3 171.8 V174" stroke="#888" stroke-width="0.7" fill="none" stroke-linecap="round" stroke-linejoin="round" /><circle cx="67.6" cy="172.7" r="1" fill="#333"/><circle cx="70.6" cy="172.7" r="1" fill="#333"/><circle cx="73.6" cy="172.7" r="1" fill="#333"/><path d="M78.8 62.4 H82 L83.8 64.2 V65.6 M78.8 62.4 V70 H81.2" stroke="#333" stroke-width="0.9" fill="none" stroke-linecap="round" stroke-linejoin="round" /><circle cx="83.2" cy="68.6" r="1.6" fill="none" stroke="#333" stroke-width="0.9"/><rect x="341.3" y="383.6" width="17.7" height="12.8" fill="#4a4a4a" rx="1.5" /><rect x="414" y="383.6" width="23.7" height="12.8" fill="#4a4a4a" rx="1.5" /><text x="350.2" y="393.2" font-size="7.4" fill="#fff" font-family="Liberation Sans" text-anchor="middle" >1</text><line x1="392.9" y1="380" x2="392.9" y2="400.4" stroke="#6a6a6a" stroke-width="0.8" /><line x1="460.3" y1="380" x2="460.3" y2="400.4" stroke="#6a6a6a" stroke-width="0.8" /><path d="M329.6 391.2 L331.7 389.2 L333.8 391.2" stroke="#aaa" stroke-width="0.9" fill="none" stroke-linecap="round" stroke-linejoin="round" /><path d="M377.9 389.2 L380 391.2 L382.1 389.2" stroke="#aaa" stroke-width="0.9" fill="none" stroke-linecap="round" stroke-linejoin="round" /><text x="361.6" y="393.2" font-size="7.2" fill="#ddd" font-family="Liberation Sans" textLength="8.7" lengthAdjust="spacingAndGlyphs" >/ 1</text><path d="M401.6 390 H407.6" stroke="#fff" stroke-width="1.1" fill="none" stroke-linecap="round" stroke-linejoin="round" /><text x="416.2" y="393.2" font-size="7.2" fill="#eee" font-family="Liberation Sans" textLength="19" lengthAdjust="spacingAndGlyphs" >125%</text><path d="M445 390 H451 M448 387 V393" stroke="#fff" stroke-width="1.1" fill="none" stroke-linecap="round" stroke-linejoin="round" /><path d="M469.6 387 H476.4 V393 H469.6 Z" stroke="#fff" stroke-width="0.9" fill="none" stroke-linecap="round" stroke-linejoin="round" /><path d="M471.2 389 L472.4 390 L471.2 391 M474.8 389 L473.6 390 L474.8 391" stroke="#fff" stroke-width="0.6" fill="none" stroke-linecap="round" stroke-linejoin="round" /><text x="479" y="393.2" font-size="7.6" fill="#fff" font-family="Liberation Sans" stroke="#fff" stroke-width="0.2" textLength="9.2" lengthAdjust="spacingAndGlyphs" >Fit</text><rect x="241.7" y="104.3" width="89.5" height="16" rx="1.5" fill="#f5f5f5" filter="url(#sh)"/><line x1="259.5" y1="104.3" x2="259.5" y2="120.3" stroke="#e0e0e0" stroke-width="0.7" /><line x1="277.4" y1="104.3" x2="277.4" y2="120.3" stroke="#e0e0e0" stroke-width="0.7" /><line x1="295.4" y1="104.3" x2="295.4" y2="120.3" stroke="#e0e0e0" stroke-width="0.7" /><line x1="313.4" y1="104.3" x2="313.4" y2="120.3" stroke="#e0e0e0" stroke-width="0.7" /><path d="M246.9 108.9 L250.4 110.6 L248.9 111.3 L247.5 113.1 Z" fill="#333" /><path d="M252.1 111.2 V115.9 M249.7 113.5 H254.5" stroke="#333" stroke-width="0.9" fill="none" stroke-linecap="round" stroke-linejoin="round" /><path d="M251.2 111.6 L252.1 110.8 L253 111.6 Z M251.2 115.4 L252.1 116.2 L253 115.4 Z M250 112.6 L249.2 113.5 L250 114.4 Z M254.2 112.6 L255 113.5 L254.2 114.4 Z" fill="#333" /><text x="264.2" y="114.9" font-size="6.3" fill="#3a3a3a" font-family="Liberation Sans" font-weight="bold" textLength="8.7" lengthAdjust="spacingAndGlyphs" >OK</text><path d="M282.6 109.6 H287.6 M285.1 109.6 V116.4" stroke="#333" stroke-width="1.05" fill="none" stroke-linecap="round" stroke-linejoin="round" /><path d="M289.4 116.5 V112.6" stroke="#333" stroke-width="0.9" fill="none" stroke-linecap="round" stroke-linejoin="round" /><path d="M288.3 113 L289.4 111.5 L290.5 113 Z" fill="#333" /><path d="M300.6 109.6 H305.6 M303.1 109.6 V116.4" stroke="#333" stroke-width="1.05" fill="none" stroke-linecap="round" stroke-linejoin="round" /><path d="M307.4 111.8 V115.6" stroke="#333" stroke-width="0.9" fill="none" stroke-linecap="round" stroke-linejoin="round" /><path d="M306.3 115.1 L307.4 116.6 L308.5 115.1 Z" fill="#333" /><path d="M319.9 110.8 H325.1 L324.6 115.6 H320.4 Z" fill="#8c8c8c" /><path d="M319.9 110.8 H325.1 L324.6 115.6 H320.4 Z" stroke="#333" stroke-width="0.8" fill="none" stroke-linecap="round" stroke-linejoin="round" /><path d="M319 109.9 H326 M321.4 109.9 L321.8 108.9 H323.2 L323.6 109.9" stroke="#333" stroke-width="0.8" fill="none" stroke-linecap="round" stroke-linejoin="round" /><rect x="241.5" y="122.8" width="333" height="14.5" fill="none" stroke="#f5a540" stroke-width="1" stroke-dasharray="1.4 1.4"/><line x1="572.9" y1="125.3" x2="572.9" y2="135.5" stroke="#222" stroke-width="0.8" /><path d="M388.59999999999997 233.39999999999998 C388.59999999999997 228.5 392.0 225.2 397.09999999999997 224.79999999999998 C396.8 229.6 393.4 233.0 388.9 233.6 Z" fill="#858585" /><path d="M387.2 235.2 L393.2 229.2" stroke="#858585" stroke-width="0.7" fill="none" stroke-linecap="round" stroke-linejoin="round" /><path d="M389.8 231.79999999999998 L394.59999999999997 227.2" stroke="#ececec" stroke-width="0.45" fill="none" stroke-linecap="round" stroke-linejoin="round" /><path d="M546.9 233.39999999999998 C546.9 228.5 550.3 225.2 555.4 224.79999999999998 C555.1 229.6 551.7 233.0 547.2 233.6 Z" fill="#858585" /><path d="M545.5 235.2 L551.5 229.2" stroke="#858585" stroke-width="0.7" fill="none" stroke-linecap="round" stroke-linejoin="round" /><path d="M548.1 231.79999999999998 L552.9 227.2" stroke="#ececec" stroke-width="0.45" fill="none" stroke-linecap="round" stroke-linejoin="round" /><path d="M433.7 297.6 H438.90000000000003 V302.2 H433.7 Z" stroke="#777" stroke-width="0.8" fill="none" stroke-linecap="round" stroke-linejoin="round" /><rect x="433.7" y="297.6" width="5.2" height="1.3" fill="#777" /><rect x="434.55" y="300.0" width="0.7" height="0.7" fill="#999" /><rect x="435.95" y="300.0" width="0.7" height="0.7" fill="#999" /><rect x="437.34999999999997" y="300.0" width="0.7" height="0.7" fill="#999" /><path d="M591.4 297.6 H596.6 V302.2 H591.4 Z" stroke="#777" stroke-width="0.8" fill="none" stroke-linecap="round" stroke-linejoin="round" /><rect x="591.4" y="297.6" width="5.2" height="1.3" fill="#777" /><rect x="592.25" y="300.0" width="0.7" height="0.7" fill="#999" /><rect x="593.65" y="300.0" width="0.7" height="0.7" fill="#999" /><rect x="595.05" y="300.0" width="0.7" height="0.7" fill="#999" /><rect x="315.4" y="203" width="56.8" height="16" rx="1.2" fill="#fff" fill-opacity="0.72" stroke="#99a" stroke-width="0.6" stroke-dasharray="1 1"/><path d="M319.2 207 H330.2 L329.2 209 H320.4 Z" fill="#4a4a4a" /><path d="M320.8 209.4 H329 L326 215.2 H324.8 Z" fill="#e5412c" /><path d="M323.4 211.6 L324.8 213 L327.4 209.8" stroke="#fff" stroke-width="0.6" fill="none" stroke-linecap="round" stroke-linejoin="round" /><text x="333.7" y="209.6" font-size="3.6" fill="#4a6fa5" font-family="Liberation Sans" textLength="35.9" lengthAdjust="spacingAndGlyphs" >Verified by pdfFiller</text><text x="333.7" y="214.6" font-size="3.4" fill="#6cc08f" font-family="Liberation Sans" textLength="23" lengthAdjust="spacingAndGlyphs" >04/27/2023</text><path d="M217 222 C222 221.2 228 220.8 234 221" stroke="#151515" stroke-width="0.85" fill="none" stroke-linecap="round" stroke-linejoin="round" /><path d="M228.3 221 C228.8 226 229 231 228 234.5 C227 236.8 222 237 219.8 234" stroke="#151515" stroke-width="0.85" fill="none" stroke-linecap="round" stroke-linejoin="round" /><ellipse cx="234" cy="231.8" rx="3.5" ry="4.7" fill="none" stroke="#151515" stroke-width="0.85"/><path d="M240 218 L240.6 236.8 M240.6 230 C242 227 247 226.2 247.8 229 L248.2 236.8" stroke="#151515" stroke-width="0.85" fill="none" stroke-linecap="round" stroke-linejoin="round" /><path d="M250.8 227.5 L251 236.8 M251 230 C252.5 227 257.6 226.4 258.4 229.4 L258.6 236.8" stroke="#151515" stroke-width="0.85" fill="none" stroke-linecap="round" stroke-linejoin="round" /><path d="M281 224.2 C279.5 221.6 272 221.2 270.3 224.4 C268.8 227.6 281.8 229.8 281.8 233.2 C281.6 236.8 272 237.8 268.1 236.2" stroke="#151515" stroke-width="0.85" fill="none" stroke-linecap="round" stroke-linejoin="round" /><path d="M283.3 237.1 L287.6 228.4 M284 236.6 C285.6 232 287.2 228.6 288.6 227.4 C289.6 226.6 289.4 229.6 287 235.6 C288.8 231.4 291.6 226.4 293.2 225.8 C294.6 225.4 292 232 290.9 240.2" stroke="#151515" stroke-width="0.85" fill="none" stroke-linecap="round" stroke-linejoin="round" /><path d="M295.5 236.4 L297.8 228.7" stroke="#151515" stroke-width="0.85" fill="none" stroke-linecap="round" stroke-linejoin="round" /><path d="M300 237 L306.9 216.6 M296.2 226 C302 225.6 308 225.6 313.7 225.8" stroke="#151515" stroke-width="0.85" fill="none" stroke-linecap="round" stroke-linejoin="round" /><path d="M303.5 236.4 L307.7 216.8 M305.6 228.6 C307 226.8 309.6 225.4 310.2 227 C310.6 229 309.8 233 309.6 236.4" stroke="#151515" stroke-width="0.85" fill="none" stroke-linecap="round" stroke-linejoin="round" />
</svg></div></body></html>
